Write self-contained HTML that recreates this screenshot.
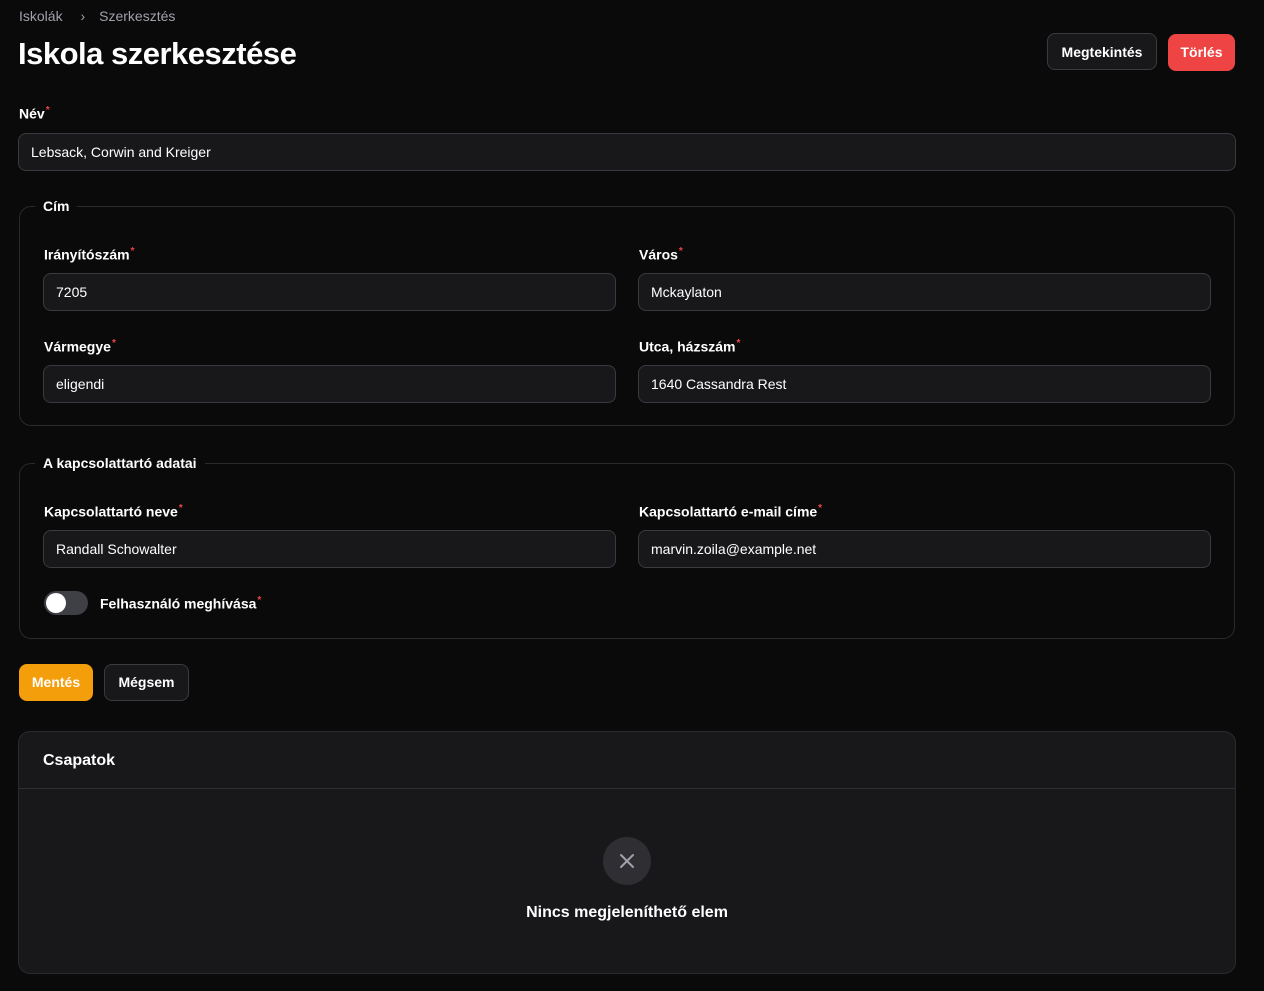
<!DOCTYPE html><html><head><meta charset="utf-8"><style>
*{box-sizing:border-box;margin:0;padding:0}
body{width:1264px;height:991px;background:#0a0a0b;font-family:"Liberation Sans",sans-serif;color:#fff;position:relative;overflow:hidden}
.a{position:absolute}
.lbl{font-size:14px;font-weight:bold;color:#fff}
.lbl sup{color:#ef4444;font-size:10px;margin-left:1px}
.inp{position:absolute;height:38px;background:#18181b;border:1px solid #3a3a3f;border-radius:8px;font-size:14px;color:#fff;padding:0 12px;line-height:36px}
.fs{position:absolute;border:1px solid #2a2a2e;border-radius:12px}
.leg{position:absolute;background:#0a0a0b;padding:0 8px;font-size:14px;font-weight:bold}
.btn{position:absolute;height:37px;border-radius:8px;font-size:14px;font-weight:bold;line-height:35px;text-align:center}
</style></head><body>
<div class="a" style="left:19px;top:8px;font-size:14px;color:#a1a1aa">Iskolák <span style="margin:0 14px">›</span>Szerkesztés</div>
<div class="a" style="left:18px;top:36px;font-size:31px;font-weight:bold;letter-spacing:-0.5px">Iskola szerkesztése</div>
<div class="btn" style="left:1047px;top:33px;width:110px;background:#18181b;border:1px solid #3a3a3f;line-height:36px">Megtekintés</div>
<div class="btn" style="left:1168px;top:34px;width:67px;background:#ef4444;border:1px solid #ef4444">Törlés</div>
<div class="a lbl" style="left:19px;top:105px">Név<sup>*</sup></div>
<div class="inp" style="left:18px;top:133px;width:1218px">Lebsack, Corwin and Kreiger</div>
<div class="fs" style="left:19px;top:206px;width:1216px;height:220px"></div>
<div class="leg" style="left:35px;top:198px">Cím</div>
<div class="a lbl" style="left:44px;top:246px">Irányítószám<sup>*</sup></div>
<div class="inp" style="left:43px;top:273px;width:573px">7205</div>
<div class="a lbl" style="left:639px;top:246px">Város<sup>*</sup></div>
<div class="inp" style="left:638px;top:273px;width:573px">Mckaylaton</div>
<div class="a lbl" style="left:44px;top:338px">Vármegye<sup>*</sup></div>
<div class="inp" style="left:43px;top:365px;width:573px">eligendi</div>
<div class="a lbl" style="left:639px;top:338px">Utca, házszám<sup>*</sup></div>
<div class="inp" style="left:638px;top:365px;width:573px">1640 Cassandra Rest</div>
<div class="fs" style="left:19px;top:463px;width:1216px;height:176px"></div>
<div class="leg" style="left:35px;top:455px">A kapcsolattartó adatai</div>
<div class="a lbl" style="left:44px;top:503px">Kapcsolattartó neve<sup>*</sup></div>
<div class="inp" style="left:43px;top:530px;width:573px">Randall Schowalter</div>
<div class="a lbl" style="left:639px;top:503px">Kapcsolattartó e-mail címe<sup>*</sup></div>
<div class="inp" style="left:638px;top:530px;width:573px">marvin.zoila@example.net</div>
<div class="a" style="left:44px;top:591px;width:44px;height:24px;border-radius:12px;background:#3f3f46"><div class="a" style="left:2px;top:2px;width:20px;height:20px;border-radius:50%;background:#fff"></div></div>
<div class="a lbl" style="left:100px;top:595px">Felhasználó meghívása<sup>*</sup></div>
<div class="btn" style="left:19px;top:664px;width:74px;background:#f59e0b;border:1px solid #f59e0b">Mentés</div>
<div class="btn" style="left:104px;top:664px;width:85px;background:#18181b;border:1px solid #3a3a3f">Mégsem</div>
<div class="a" style="left:18px;top:731px;width:1218px;height:243px;background:#18181b;border:1px solid #2a2a2e;border-radius:12px">
<div class="a" style="left:24px;top:20px;font-size:16px;font-weight:bold">Csapatok</div>
<div class="a" style="left:0;top:56px;width:100%;border-top:1px solid #2f2f33"></div>
<div class="a" style="left:584px;top:105px;width:48px;height:48px;border-radius:50%;background:#2e2e33"><svg width="48" height="48" viewBox="0 0 48 48"><path d="M18 18L30 30M30 18L18 30" stroke="#a1a1aa" stroke-width="2" stroke-linecap="round"/></svg></div>
<div class="a" style="left:0;top:172px;width:100%;text-align:center;font-size:16px;font-weight:bold">Nincs megjeleníthető elem</div>
</div>
</body></html>
